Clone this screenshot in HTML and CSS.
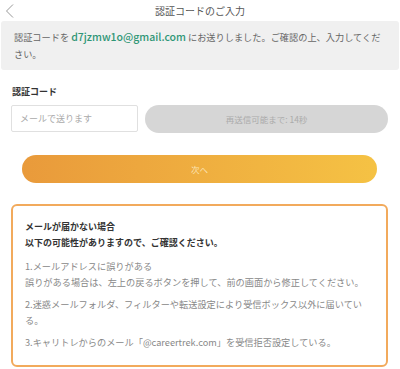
FILE: index.html
```html
<!DOCTYPE html>
<html lang="ja">
<head>
  <meta charset="UTF-8">
  <title>認証コードのご入力</title>
  <link rel="stylesheet" href="styles.css">
</head>
<body>

  <div class="header">
    <svg class="back" width="14" height="20" viewBox="0 0 14 20">
      <polyline points="13,4.5 6.5,11 13,17.5" fill="none" stroke="#999" stroke-width="1"/>
    </svg>
    <h1>認証コードのご入力</h1>
  </div>

  <div class="notice">
    認証コードを <span class="email">d7jzmw1o@gmail.com</span> にお送りしました。ご確認の上、入力してください。
  </div>

  <div class="content">
    <div class="label">認証コード</div>

    <div class="code-row">
      <input type="text" class="code-input" placeholder="メールで送ります">
      <button class="resend-btn" disabled>再送信可能まで: 14秒</button>
    </div>

    <button class="next-btn">次へ</button>

    <div class="help-box">
      <div class="help-title">メールが届かない場合<br>以下の可能性がありますので、ご確認ください。</div>
      <p>1.メールアドレスに誤りがある<br>誤りがある場合は、左上の戻るボタンを押して、前の画面から修正してください。</p>
      <p>2.迷惑メールフォルダ、フィルターや転送設定により受信ボックス以外に届いている。</p>
      <p>3.キャリトレからのメール「@careertrek.com」を受信拒否設定している。</p>
    </div>
  </div>

</body>
</html>
```

FILE: styles.css
```css
body {
  font-family: "Noto Sans CJK JP", "Noto Sans", sans-serif;
  background-color: #ffffff;
  margin: 0;
  padding: 0;
  color: #333;
}

.header {
  position: relative;
  height: 21px;
  text-align: center;
}

.back {
  position: absolute;
  left: 0;
  top: 0;
}

h1 {
  margin: 0;
  font-size: 10px;
  font-weight: 400;
  line-height: 21px;
  color: #555;
}

.notice {
  margin: 0 1px;
  padding: 8px 12px 7px 13px;
  background-color: #f0f0f0;
  border-radius: 3px;
  font-size: 9.2px;
  line-height: 17px;
  color: #666;
}

.email {
  color: #2f9676;
  font-size: 10.5px;
  font-weight: 500;
  line-height: 1;
}

.content {
  padding: 0 12px 0 11px;
}

.label {
  margin-top: 16px;
  font-size: 9px;
  font-weight: 700;
  line-height: 12px;
  padding-left: 1px;
}

.code-row {
  display: flex;
  align-items: flex-start;
  gap: 7px;
  margin-top: 7px;
}

.code-input {
  box-sizing: border-box;
  width: 127px;
  height: 27px;
  border: 1px solid #e0e0e0;
  border-radius: 2px;
  padding: 0 8px;
  font-family: inherit;
  font-size: 9px;
  outline: none;
}

.code-input::placeholder {
  color: #aaa;
}

.resend-btn {
  flex: 1;
  height: 28px;
  border: none;
  border-radius: 14px;
  background-color: #d6d6d6;
  color: #ababab;
  font-family: inherit;
  font-size: 8.5px;
}

.next-btn {
  display: block;
  width: 355px;
  height: 28px;
  margin: 22px 0 0 11px;
  border: none;
  border-radius: 14px;
  background: linear-gradient(to right, #e99a3b, #f5c244);
  color: #fbe3b4;
  font-family: inherit;
  font-size: 8.5px;
}

.help-box {
  box-sizing: border-box;
  margin-top: 21px;
  padding: 13px 12px 15px 12px;
  border: 2px solid #f2aa5c;
  border-radius: 6px;
  height: 163px;
}

.help-title {
  font-size: 9px;
  font-weight: 700;
  line-height: 16px;
  color: #333;
}

.help-box p {
  margin: 6px 0 0;
  font-size: 9.2px;
  line-height: 16px;
  color: #888;
}

.help-box .help-title + p {
  margin-top: 7px;
}
```
